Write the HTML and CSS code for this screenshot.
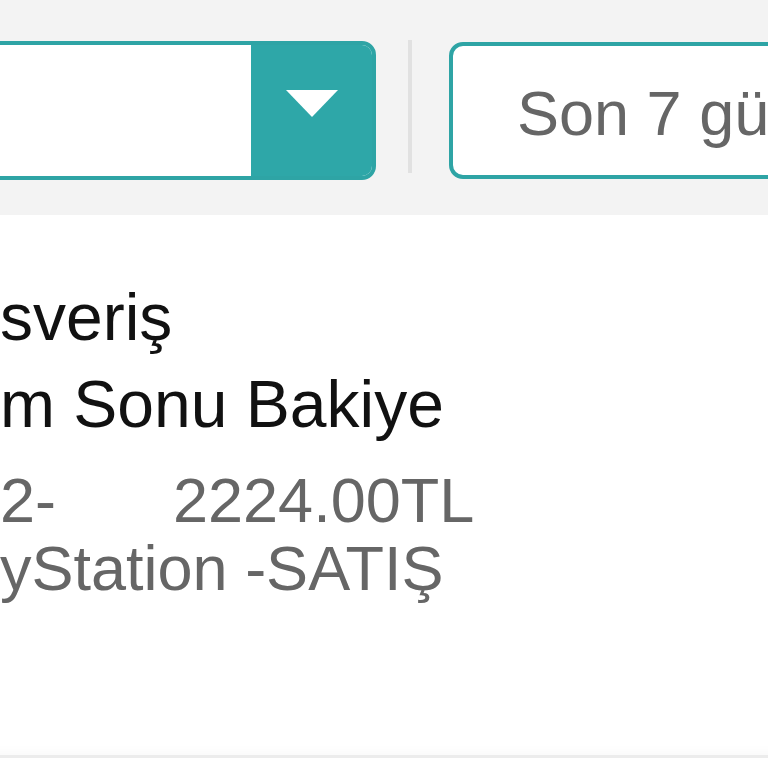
FILE: index.html
```html
<!DOCTYPE html>
<html lang="tr">
<head>
    <meta charset="UTF-8">
    <meta name="viewport" content="width=device-width, initial-scale=1.0">
    <title>Hesap Hareketleri</title>
    <link rel="stylesheet" href="styles.css">
</head>
<body>
    <div class="filters">
        <div class="select">
            <div class="select-value"></div>
            <div class="select-arrow">
                <svg width="52" height="27" viewBox="0 0 52 27"><polygon points="0,0 52,0 26,27" fill="#fff"/></svg>
            </div>
        </div>
        <div class="divider"></div>
        <div class="date-box">Son 7 gün</div>
    </div>

    <div class="content">
        <div class="title">
            <div class="line">sveriş</div>
            <div class="line">m Sonu Bakiye</div>
        </div>
        <div class="detail">
            <div class="row">
                <span class="row-left">2-</span>
                <span>2224.00TL</span>
            </div>
            <div class="row">yStation -SATIŞ</div>
        </div>
    </div>
</body>
</html>
```

FILE: styles.css
```css
        body {
            margin: 0;
            background-color: #fff;
            font-family: "Liberation Sans", Arial, sans-serif;
            overflow: hidden;
            height: 768px;
        }

        .filters {
            height: 215px;
            box-sizing: border-box;
            padding-top: 41px;
            background-color: #f3f3f3;
            display: flex;
            align-items: flex-start;
        }

        .select {
            flex: 0 0 420px;
            margin-left: -44px;
            height: 139px;
            box-sizing: border-box;
            border: 4px solid #2ea4a5;
            border-radius: 14px;
            background-color: #fff;
            display: flex;
            overflow: hidden;
        }
        .select-value {
            flex: 1;
        }
        .select-arrow {
            width: 121px;
            background-color: #2ea7a8;
            display: flex;
            justify-content: center;
            align-items: center;
        }
        .select-arrow svg {
            margin-bottom: 14px;
        }

        .divider {
            flex: 0 0 4px;
            height: 133px;
            margin-left: 32px;
            margin-top: -1px;
            background-color: #e1e1e1;
        }

        .date-box {
            flex: 0 0 400px;
            margin-left: 37px;
            margin-top: 1px;
            height: 137px;
            box-sizing: border-box;
            border: 4px solid #2ea4a5;
            border-radius: 14px;
            background-color: #fff;
            padding: 6px 0 0 64px;
            font-size: 63px;
            line-height: 123px;
            color: #666;
            white-space: nowrap;
        }

        .content {
            padding-top: 59px;
            height: 543px;
            box-sizing: border-box;
            border-bottom: 3px solid #ececec;
            box-shadow: inset 0 -14px 10px -10px rgba(0, 0, 0, 0.025);
        }
        .title {
            font-size: 66px;
            line-height: 87px;
            color: #111;
        }
        .detail {
            margin-top: 18px;
            font-size: 63px;
            line-height: 68px;
            color: #666;
        }
        .row {
            display: flex;
            white-space: nowrap;
        }
        .row-left {
            width: 173px;
        }
```
